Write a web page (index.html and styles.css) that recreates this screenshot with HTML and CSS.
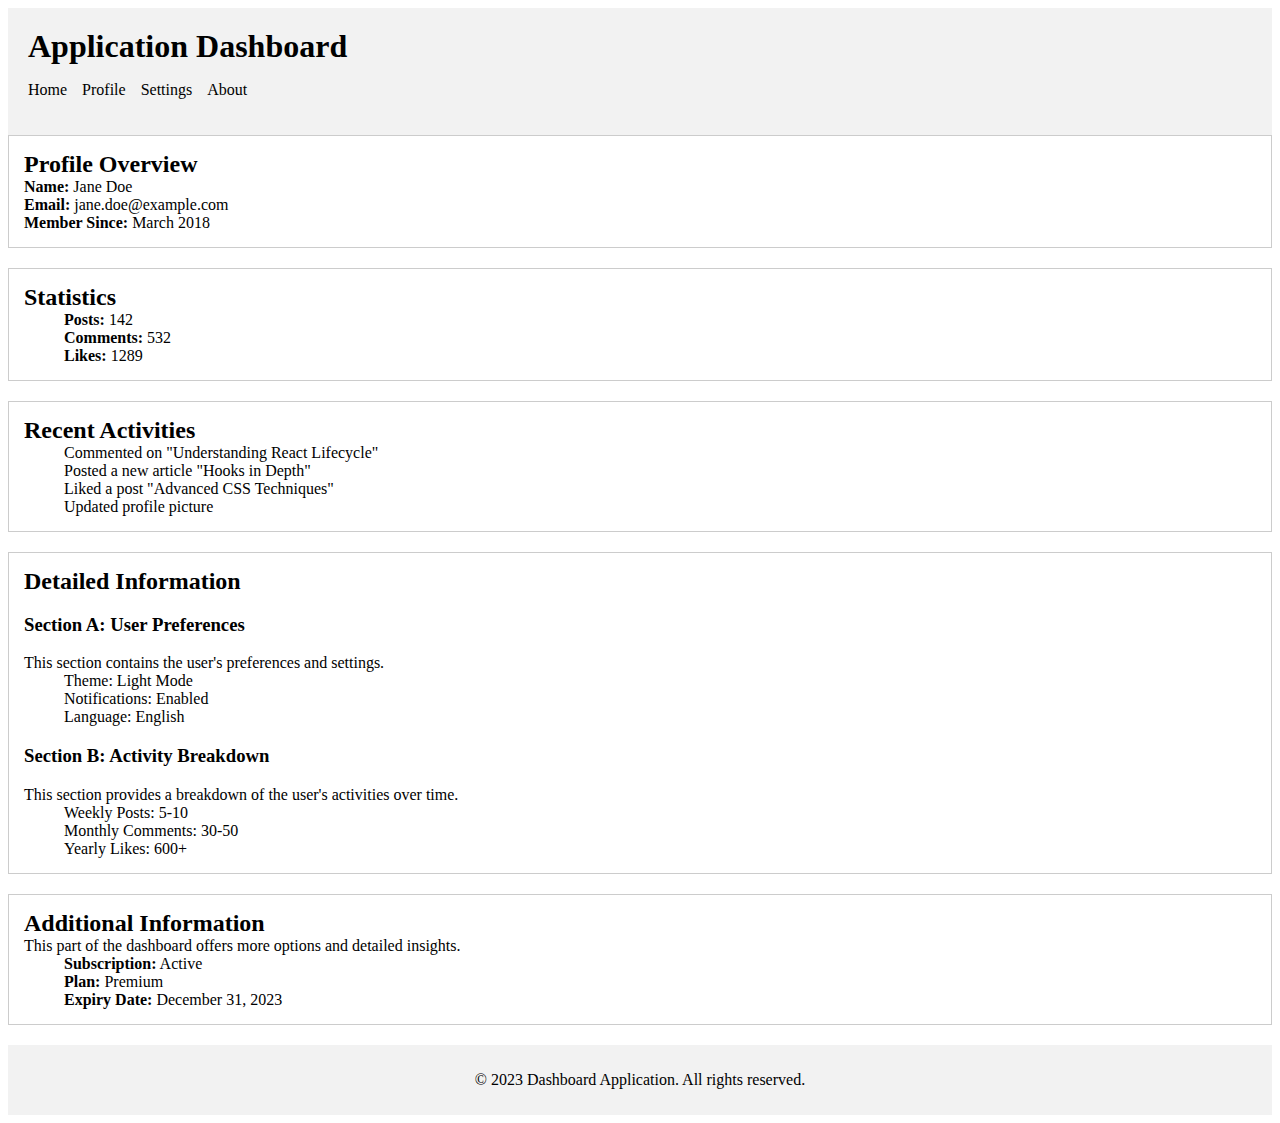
FILE: index.html
```html
<!DOCTYPE html>
<html lang="en">
<head>
<meta charset="utf-8">
<title>Application Dashboard</title>
<link rel="stylesheet" href="styles.css">
</head>
<body>
<header class="app-header">
  <h1 class="app-title">Application Dashboard</h1>
  <nav>
    <ul class="nav">
      <li><a class="nav-link" href="#">Home</a></li>
      <li><a class="nav-link" href="#">Profile</a></li>
      <li><a class="nav-link" href="#">Settings</a></li>
      <li><a class="nav-link" href="#">About</a></li>
    </ul>
  </nav>
</header>
<main>
  <section class="card">
    <h2 class="card-title">Profile Overview</h2>
    <p class="line"><strong>Name:</strong> Jane Doe</p>
    <p class="line"><strong>Email:</strong> jane.doe@example.com</p>
    <p class="line"><strong>Member Since:</strong> March 2018</p>
  </section>
  <section class="card">
    <h2 class="card-title">Statistics</h2>
    <ul class="list">
      <li><strong>Posts:</strong> 142</li>
      <li><strong>Comments:</strong> 532</li>
      <li><strong>Likes:</strong> 1289</li>
    </ul>
  </section>
  <section class="card">
    <h2 class="card-title">Recent Activities</h2>
    <ul class="list">
      <li>Commented on "Understanding React Lifecycle"</li>
      <li>Posted a new article "Hooks in Depth"</li>
      <li>Liked a post "Advanced CSS Techniques"</li>
      <li>Updated profile picture</li>
    </ul>
  </section>
  <section class="card">
    <h2 class="card-title">Detailed Information</h2>
    <h3 class="sub-title">Section A: User Preferences</h3>
    <p class="line">This section contains the user's preferences and settings.</p>
    <ul class="list">
      <li>Theme: Light Mode</li>
      <li>Notifications: Enabled</li>
      <li>Language: English</li>
    </ul>
    <h3 class="sub-title">Section B: Activity Breakdown</h3>
    <p class="line">This section provides a breakdown of the user's activities over time.</p>
    <ul class="list">
      <li>Weekly Posts: 5-10</li>
      <li>Monthly Comments: 30-50</li>
      <li>Yearly Likes: 600+</li>
    </ul>
  </section>
  <section class="card">
    <h2 class="card-title">Additional Information</h2>
    <p class="line">This part of the dashboard offers more options and detailed insights.</p>
    <ul class="list">
      <li><strong>Subscription:</strong> Active</li>
      <li><strong>Plan:</strong> Premium</li>
      <li><strong>Expiry Date:</strong> December 31, 2023</li>
    </ul>
  </section>
</main>
<footer class="app-footer">
  <p class="line">© 2023 Dashboard Application. All rights reserved.</p>
</footer>
</body>
</html>
```

FILE: styles.css
```css
body {
  margin: 8px;
  font-family: "Liberation Serif", "Times New Roman", serif;
  font-size: 16px;
  color: #000;
  background: #fff;
}

.app-header {
  background: #f2f2f2;
  padding: 20px;
}

.app-title {
  margin: 0;
  font-size: 32px;
  font-weight: bold;
}

.nav {
  display: flex;
  gap: 15px;
  margin: 16px 0;
  padding: 0;
  list-style: none;
}

.nav-link {
  color: inherit;
  text-decoration: none;
}

.card {
  border: 1px solid #ccc;
  padding: 15px;
  margin-bottom: 20px;
}

.card-title {
  margin: 0;
  font-size: 24px;
  font-weight: bold;
}

.sub-title {
  margin: 18.72px 0;
  font-size: 18.72px;
  font-weight: bold;
}

.line {
  margin: 0;
}

.list {
  margin: 0;
  padding-left: 40px;
  list-style: none;
}

.app-footer {
  background: #f2f2f2;
  padding: 26px 20px;
  text-align: center;
}
```
